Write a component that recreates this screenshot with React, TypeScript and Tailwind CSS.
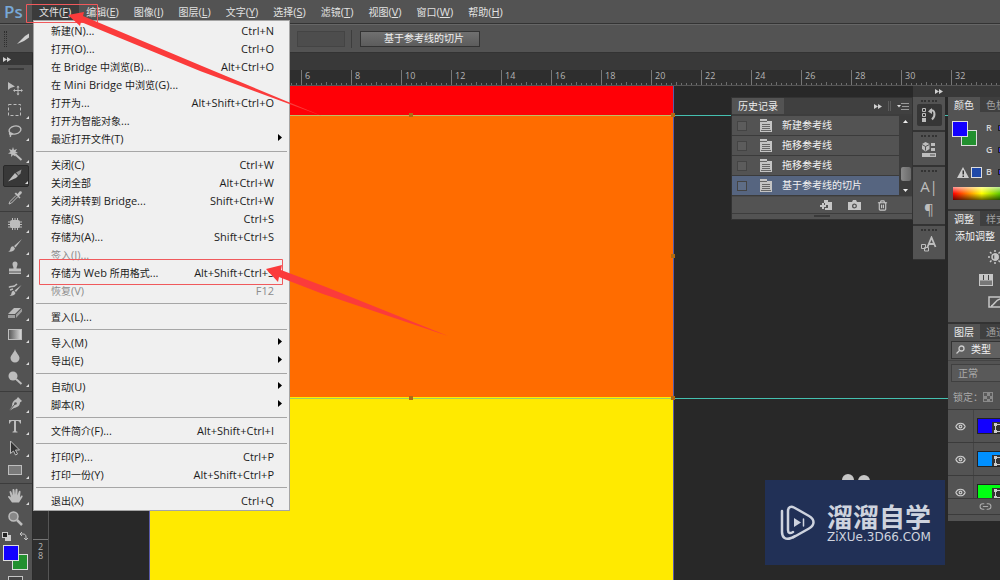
import * as React from "react"
import { Eye, Link2, Trash2 } from "lucide-react"
import clsx from "clsx"

const UI_FONT = "font-['Open_Sans','Noto_Sans_CJK_SC',sans-serif]"

const MENUS: [string, string][] = [
  ["文件", "F"],
  ["编辑", "E"],
  ["图像", "I"],
  ["图层", "L"],
  ["文字", "Y"],
  ["选择", "S"],
  ["滤镜", "T"],
  ["视图", "V"],
  ["窗口", "W"],
  ["帮助", "H"],
]

interface MenuEntry {
  label: string
  keys?: string
  submenu?: boolean
  disabled?: boolean
}

const FILE_MENU: MenuEntry[][] = [
  [
    { label: "新建(N)...", keys: "Ctrl+N" },
    { label: "打开(O)...", keys: "Ctrl+O" },
    { label: "在 Bridge 中浏览(B)...", keys: "Alt+Ctrl+O" },
    { label: "在 Mini Bridge 中浏览(G)..." },
    { label: "打开为...", keys: "Alt+Shift+Ctrl+O" },
    { label: "打开为智能对象..." },
    { label: "最近打开文件(T)", submenu: true },
  ],
  [
    { label: "关闭(C)", keys: "Ctrl+W" },
    { label: "关闭全部", keys: "Alt+Ctrl+W" },
    { label: "关闭并转到 Bridge...", keys: "Shift+Ctrl+W" },
    { label: "存储(S)", keys: "Ctrl+S" },
    { label: "存储为(A)...", keys: "Shift+Ctrl+S" },
    { label: "签入(I)...", disabled: true },
    { label: "存储为 Web 所用格式...", keys: "Alt+Shift+Ctrl+S" },
    { label: "恢复(V)", keys: "F12", disabled: true },
  ],
  [{ label: "置入(L)..." }],
  [
    { label: "导入(M)", submenu: true },
    { label: "导出(E)", submenu: true },
  ],
  [
    { label: "自动(U)", submenu: true },
    { label: "脚本(R)", submenu: true },
  ],
  [{ label: "文件简介(F)...", keys: "Alt+Shift+Ctrl+I" }],
  [
    { label: "打印(P)...", keys: "Ctrl+P" },
    { label: "打印一份(Y)", keys: "Alt+Shift+Ctrl+P" },
  ],
  [{ label: "退出(X)", keys: "Ctrl+Q" }],
]

// Chinese glyphs are set one pixel smaller than the latin ones
function Mixed({ text }: { text: string }) {
  return (
    <>
      {text.split(/([\u4e00-\u9fff]+)/).filter(Boolean).map((part, i) => (
        <span key={i} className={/[\u4e00-\u9fff]/.test(part) ? "text-[10px]" : "text-[11px]"}>
          {part}
        </span>
      ))}
    </>
  )
}

function Collapse({ className }: { className?: string }) {
  return (
    <svg className={clsx("h-[5px] w-2 shrink-0", className)} viewBox="0 0 8 5" fill="#d0d0d0">
      <path d="M0 0 4 2.500 0 5zM4 0l4 2.500L4 5z" />
    </svg>
  )
}

function MenuBar() {
  return (
    <nav className="flex h-6 shrink-0 items-center border-b border-[#333] bg-[#535353]">
      <span className="w-8 shrink-0 pl-1 text-[17px] leading-6 font-semibold text-[#78a8d6]">Ps</span>
      {MENUS.map(([name, key], i) => (
        <button
          key={key}
          className={clsx(
            "h-full pr-2 pl-[7px] text-[11px] leading-5 whitespace-nowrap text-[#e2e2e2]",
            i === 0 && "bg-[#3b3b3b]"
          )}
        >
          <span className="text-[10px]">{name}</span>(<u>{key}</u>)
        </button>
      ))}
    </nav>
  )
}

function OptionsBar() {
  return (
    <div className="flex h-[29px] shrink-0 items-center border-t border-b border-t-[#666] border-b-[#333] bg-[#535353]">
      <span className="ml-1 h-4 w-[3px] border-x border-dotted border-[#2e2e2e]" />
      <svg className="ml-2 size-4 text-[#cfcfcf]" viewBox="0 0 16 16" fill="currentColor">
        <path d="M2 13 10 5l4-2.500v4L9 10z" />
      </svg>
      <div className="ml-[266px] h-4 w-12 border border-[#444] bg-[#4d4d4d]" />
      <span className="ml-1.5 h-[18px] w-px bg-[#3d3d3d]" />
      <button className="ml-2 h-4 w-[120px] border border-[#333] bg-linear-to-b from-[#707070] to-[#5c5c5c] pl-2 text-[10px] leading-[13px] text-[#f0f0f0]">
        基于参考线的切片
      </button>
    </div>
  )
}

function FileMenu() {
  return (
    <div className="absolute top-5 left-[33px] z-20 w-[257px] border border-[#a5a5a5] bg-[#f0f0f0] pt-px">
      {FILE_MENU.map((group, g) => (
        <React.Fragment key={g}>
          {g > 0 && <hr className="mx-0.5 mt-[3px] mb-1 border-t border-[#a6a6a6]" />}
          {group.map((item) => (
            <button
              key={item.label}
              disabled={item.disabled}
              className={clsx(
                "flex h-[18px] w-full items-center justify-between pr-[15px] pl-[17px] text-[11px] leading-[18px] whitespace-nowrap",
                item.disabled ? "text-[#8c8c8c]" : "text-[#1c1c1c]"
              )}
            >
              <span>
                <Mixed text={item.label} />
              </span>
              {item.keys && <span>{item.keys}</span>}
              {item.submenu && (
                <svg className="-mr-2 mb-1 h-[7px] w-1" viewBox="0 0 4 7" fill="#000">
                  <path d="M0 0 4 3.500 0 7z" />
                </svg>
              )}
            </button>
          ))}
        </React.Fragment>
      ))}
    </div>
  )
}

interface Tool {
  name: string
  art: React.ReactNode
  single?: boolean
}

const TOOLS: Tool[][] = [
  [
    {
      name: "移动",
      single: true,
      art: (
        <>
          <path d="M1 2v8l2.500-2L8 6.500z" />
          <path d="M11 6.500v8M7 10.500h8" stroke="currentColor" />
          <path d="m11 5.500 1.500 2h-3zM11 15.500l1.500-2h-3zM6 10.500l2-1.500v3zM16 10.500l-2-1.500v3z" />
        </>
      ),
    },
    { name: "选框", art: <rect x="1.500" y="2.500" width="12" height="11" fill="none" stroke="currentColor" strokeDasharray="3 2" /> },
    {
      name: "套索",
      art: (
        <g fill="none" stroke="currentColor" strokeWidth="1.400">
          <ellipse cx="8" cy="6" rx="6" ry="4" transform="rotate(-12 8 6)" />
          <path d="M3 8.500c-1.500 2 1.500 3 2 1.500S2.500 9 3.500 13" />
        </g>
      ),
    },
    {
      name: "魔棒",
      art: (
        <>
          <path d="m6 1 1 3 3-1-1.500 2.500L11 7l-3 .5.500 3L6 9l-2 2 .2-3L1 7.500 3.500 6 2 3l3 1z" />
          <path d="m8 8 6.500 6" stroke="currentColor" strokeWidth="2" />
        </>
      ),
    },
    {
      name: "切片",
      art: (
        <>
          <path d="M1 13.500 8 5l3 3-2 2z" />
          <path d="m9 4.500 5.500-3-1 4-2 2z" opacity=".7" />
        </>
      ),
    },
    {
      name: "吸管",
      art: (
        <>
          <path d="M9 2.500 10.500 4l2-2.500c2-1 3 .5 2 2L12 6l1.500 1.500-1 1L7.500 3.500z" />
          <path d="m9 5.500-6 6L2 14l2.500-1 6-6" fill="none" stroke="currentColor" />
        </>
      ),
    },
  ],
  [
    {
      name: "修补",
      art: (
        <>
          <rect x="3" y="4" width="10" height="8" rx="2" />
          <path d="M5.500 2v12M8 2v12M10.500 2v12M1 6h14M1 8.500h14M1 11h14" stroke="currentColor" />
        </>
      ),
    },
    { name: "画笔", art: <path d="M15 1 8.500 9.500 7 8zM6.500 8.500l1.500 2C7 13.500 4 14 1 13.500c2-.5 2-1 2.500-3s2-2.500 3-2z" /> },
    { name: "仿制图章", art: <path d="M5.500 4a2.500 2.500 0 0 1 5 0c0 2-1 2.500-1 4.500H14v3H2v-3h4.500c0-2-1-2.500-1-4.500zM2 12.500h12V14H2z" /> },
    {
      name: "历史画笔",
      art: (
        <>
          <path d="M14.500 3 9 10 7.500 8.500zM7 9l1.500 2c-1 2.500-3 3-6 2.500 2-.5 1.500-1 2-2.500S6 8.500 7 9z" />
          <path d="M2 5.500C4 3 6 6.500 10 2M3 8l3-1" fill="none" stroke="currentColor" strokeWidth="1.500" />
        </>
      ),
    },
    {
      name: "橡皮擦",
      art: (
        <>
          <path d="m1 10 6-6h7l-6 6z" />
          <path d="M1 11h7v3H1zM9 10.500l6-6v3L9 14z" opacity=".7" />
        </>
      ),
    },
    {
      name: "渐变",
      art: (
        <>
          <defs>
            <linearGradient id="toolGradient">
              <stop stopColor="#555" />
              <stop offset="1" stopColor="#ddd" />
            </linearGradient>
          </defs>
          <rect x="1.500" y="3.500" width="13" height="10" fill="url(#toolGradient)" stroke="currentColor" />
        </>
      ),
    },
    { name: "模糊", art: <path d="M8 1c1 4 4.500 6 4.500 9a4.500 4.500 0 0 1-9 0C3.500 7 7 5 8 1z" /> },
    {
      name: "减淡",
      art: (
        <>
          <circle cx="6" cy="6" r="4.500" />
          <path d="m9 9 5.500 5" stroke="currentColor" strokeWidth="2" />
        </>
      ),
    },
  ],
  [
    {
      name: "钢笔",
      art: (
        <>
          <path d="m11 1 4 4-2 1.500c0 3-2.500 5-6 5.500l-5 3 3-5C5 6 7 4 9.500 3z" />
          <path d="m2 15 6-7" stroke="#535353" />
          <circle cx="8.500" cy="7.500" r="1.300" fill="#535353" />
        </>
      ),
    },
    { name: "文字", art: <path d="M2 2h12v3.500h-1C12.500 3.500 12 3 9 3v9.500c0 1 .5 1 1.500 1.200v.8h-5v-.8C6.500 13.500 7 13.500 7 12.500V3C4 3 3.500 3.500 3 5.500H2z" /> },
    { name: "路径选择", art: <path d="M3.500 1v12.500l3-2.500 2 4 2-1-2-4h4z" fill="#333" stroke="currentColor" /> },
    { name: "矩形", art: <rect x="1.500" y="3.500" width="13" height="9" fill="#7a7a7a" stroke="currentColor" /> },
  ],
  [
    { name: "抓手", art: <path d="M5 14.500 1 9c0-1.500 1.500-1 3 .5L2.500 4c0-1.300 1.500-1.300 2 0l1 3.500V2c0-1.300 1.800-1.300 2 0l.5 5 .5-5.500c.5-1 2-1 2 .3V7.500l1.200-4c.5-1.200 2-.8 1.800.5L13 9.500l1-1.500c1-1 2-.3 1.500 1L12 14.500z" /> },
    {
      name: "缩放",
      single: true,
      art: (
        <>
          <circle cx="6.500" cy="6.500" r="4.500" fill="#888" stroke="currentColor" strokeWidth="1.500" />
          <path d="m10 10 5 5" stroke="currentColor" strokeWidth="2.500" />
        </>
      ),
    },
  ],
]

function Toolbar() {
  return (
    <aside className="flex w-[33px] shrink-0 flex-col overflow-hidden border-r border-[#2b2b2b] bg-[#535353]">
      <div className="flex h-3 shrink-0 items-center bg-[#383838] pl-[3px]">
        <Collapse />
      </div>
      <div className="mx-2 mt-[3px] mb-[7px] h-[2px] shrink-0 bg-[#3a3a3a]" />
      {TOOLS.map((group, g) => (
        <div key={g} className={clsx("shrink-0", g > 0 && "mt-[2px] border-t border-[#3c3c3c] pt-px")}>
          {group.map((tool) => (
            <button
              key={tool.name}
              aria-label={tool.name}
              className={clsx(
                "relative mx-[3px] flex h-[22px] w-[26px] items-center justify-center rounded-xs text-[#bdbdbd]",
                tool.name === "切片" && "border border-[#292929] bg-[#383838]"
              )}
            >
              <svg className="mr-0.5 size-4" viewBox="0 0 16 16" fill="currentColor">
                {tool.art}
              </svg>
              {!tool.single && (
                <svg className="absolute right-0 bottom-0.5 size-[3px]" viewBox="0 0 3 3" fill="#ddd">
                  <path d="M3 0v3H0z" />
                </svg>
              )}
            </button>
          ))}
        </div>
      ))}
      <div className="flex h-[14px] shrink-0 items-center gap-2 pl-0.5 text-[#c4c4c4]">
        <svg className="size-[9px]" viewBox="0 0 9 9">
          <rect x="3" y="3" width="6" height="6" fill="#ccc" />
          <rect x=".5" y=".5" width="5" height="5" fill="#222" stroke="#ccc" />
        </svg>
        <svg className="size-[9px]" viewBox="0 0 9 9" fill="none" stroke="currentColor">
          <path d="M3 0 1 2l2 2M1 2h3c2 0 3 1 3 3v3M5 6l2 2 2-2" />
        </svg>
      </div>
      <Swatches className="mt-0.5 ml-[3px]" />
      <div className="mt-1.5 ml-2 h-3 w-[15px] shrink-0 border border-[#c4c4c4] bg-[#444]" />
    </aside>
  )
}

function Swatches({ className }: { className?: string }) {
  return (
    <div className={clsx("relative h-[25px] w-[25px] shrink-0", className)}>
      <span className="absolute right-0 bottom-0 size-4 border border-[#ddd] bg-[#22902f]" />
      <span className="absolute top-0 left-0 size-4 border border-[#ddd] bg-[#1200ff]" />
    </div>
  )
}

// one cell is two centimetres; the origin sits at the left edge of the artboard
function Ruler() {
  return (
    <div className="flex h-4 shrink-0 overflow-hidden border-b border-[#555] bg-[#2e2e2e] pl-[18px]">
      {Array.from({ length: 19 }, (_, i) => (
        <div key={i} className="flex w-[50px] shrink-0 flex-col justify-between border-l border-[#777]">
          <span className="pl-[3px] text-[9px] leading-3 text-[#b4b4b4]">{Math.abs(i * 2 - 4)}</span>
          <svg className="h-[3px] w-[49px] shrink-0" stroke="#6d6d6d">
            <path d="M4.500 1v2M9.500 1v2M14.500 1v2M19.500 1v2M24.500 0v3M29.500 1v2M34.500 1v2M39.500 1v2M44.500 1v2" />
          </svg>
        </div>
      ))}
    </div>
  )
}

function Artwork() {
  return (
    <div className="absolute inset-0 overflow-hidden">
      <div className="absolute inset-y-0 left-0 flex w-4 flex-col justify-end border-r border-[#555] bg-[#2e2e2e] pb-5">
        <div className="border-t border-[#777] pl-[5px] text-[9px] leading-[9px] text-[#b4b4b4]">
          <div className="pt-0.5">2</div>
          <div>8</div>
        </div>
      </div>
      <div className="absolute inset-y-0 left-[116px] flex w-[525px] flex-col border-x border-[#5a5aa8]">
        <div className="h-[29px] bg-[#ff0006]" />
        <div className="h-[282px] bg-[#ff6c00]" />
        <div className="flex-1 bg-[#ffea00]" />
      </div>
      <svg className="absolute inset-0 size-full">
        <path d="M16 29.500h2000M16 312.500h2000" stroke="#45c0b0" />
        <path d="M117 29.500h523" stroke="#bdbf66" />
        <path d="M117 312.500h523" stroke="#9fcf62" />
        <g fill="#b06a14">
          <rect x="376" y="27" width="4" height="4" />
          <rect x="638" y="27" width="4" height="4" />
          <rect x="638" y="168" width="4" height="4" />
          <rect x="376" y="310" width="4" height="4" />
          <rect x="638" y="310" width="4" height="4" />
        </g>
      </svg>
    </div>
  )
}

function PanelTabs({ active, rest }: { active: string; rest: string }) {
  return (
    <div className="flex h-[15px] shrink-0 bg-[#3f3f3f] text-[10px] leading-[14px] whitespace-nowrap">
      <button className="bg-[#535353] px-1.5 text-[#ececec]">{active}</button>
      <button className="pl-1.5 text-[#a0a0a0]">{rest}</button>
    </div>
  )
}

const HISTORY = ["新建参考线", "拖移参考线", "拖移参考线", "基于参考线的切片"]

function HistoryPanel() {
  return (
    <section className="absolute top-[11px] right-[87px] w-[182px] border border-[#333] bg-[#535353]">
      <div className="flex h-4 items-center bg-[#404040]">
        <button className="h-full bg-[#535353] px-1.5 text-[10px] leading-[15px] text-[#ececec]">历史记录</button>
        <Collapse className="ml-auto" />
        <span className="mx-1.5 h-2.5 w-[3px] border-x border-[#5c5c5c]" />
        <svg className="mr-[3px] h-[7px] w-3" viewBox="0 0 12 7" stroke="#999">
          <path d="M4 .5h8M5 3.500h7M4 6.500h8" />
          <path d="M0 2h4L2 4.500z" fill="#ddd" stroke="none" />
        </svg>
      </div>
      <div className="flex border-t-2 border-b border-t-[#3d3d3d] border-b-[#4a4a4a]">
        <ul className="flex-1">
          {HISTORY.map((step, i) => (
            <li
              key={i}
              className={clsx(
                "flex h-5 items-center border-b border-[#3b3b3b] pl-[5px] text-[10px] text-[#f2f2f2]",
                i === 3 && "bg-[#566580]"
              )}
            >
              <span className="size-[10px] border border-[#444] bg-white/5" />
              <svg className="mr-2.5 ml-[13px] h-[13px] w-3" viewBox="0 0 12 13">
                <path d="M0 0h7v2h5v11H0z" fill="#c4c4c4" />
                <path d="M2 5.500h8M2 7.500h8M2 9.500h8M1 11.500h10" stroke="#666" />
                <path d="M0 2.500h7" stroke="#666" />
              </svg>
              {step}
            </li>
          ))}
        </ul>
        <div className="flex w-[13px] flex-col items-center justify-end bg-[#3c3c3c] pb-1">
          <svg className="mt-1 mb-auto h-[3px] w-[5px]" fill="#eee">
            <path d="M2.500 0 5 3H0z" />
          </svg>
          <span className="mb-2 h-[14px] w-2.5 rounded-xs bg-linear-to-r from-[#8a8a8a] to-[#6a6a6a]" />
          <svg className="h-[3px] w-[5px]" fill="#eee">
            <path d="M0 0h5L2.500 3z" />
          </svg>
        </div>
      </div>
      <div className="flex h-4 items-center justify-end gap-4 pr-6 text-[#c6c6c6]">
        <svg className="h-3 w-3" viewBox="0 0 12 12" fill="currentColor">
          <path d="M4 1h4v2h4v8H5V9h3V6H5V4H4zM0 6h2V4h2v2h2v2H4v2H2V8H0z" />
        </svg>
        <svg className="h-3 w-[13px]" viewBox="0 0 13 12" fill="currentColor" fillRule="evenodd">
          <path d="M0 3h4l1-2h3l1 2h4v8H0zM6.500 4.500a2.500 2.500 0 1 0 0 5 2.500 2.500 0 0 0 0-5z" />
          <circle cx="6.500" cy="7" r="1.200" />
        </svg>
        <Trash2 className="size-[11px]" strokeWidth={2.5} />
      </div>
      <div className="flex h-1.5 items-start justify-center border-t border-[#3d3d3d]">
        <span className="mt-px h-[2px] w-4 bg-[#3a3a3a]" />
      </div>
    </section>
  )
}

function DockGroup({ children }: { children: React.ReactNode }) {
  return (
    <div className="flex flex-col items-center bg-[#535353] pt-[3px] pb-1 text-[#bdbdbd]">
      <span className="mb-0.5 h-0 w-4 border-t-2 border-dotted border-[#333]" />
      {children}
    </div>
  )
}

function IconDock() {
  return (
    <div className="flex w-8 shrink-0 flex-col gap-0.5 self-start bg-[#333] pb-px">
      <DockGroup>
        <button aria-label="历史记录" className="flex h-[22px] w-[25px] items-center justify-center rounded-xs bg-[#363636]">
          <svg className="size-4" viewBox="0 0 16 16" fill="none" stroke="currentColor">
            <path d="M1.500 1.500h3v3h-3zM1.500 6.500h3v3h-3z" />
            <path d="M1 11h4v4H1z" fill="currentColor" stroke="none" />
            <path d="M9 3.500c5-1.500 6 5 2 9" strokeWidth="2" />
            <path d="M7 4.500 11 1v6z" fill="currentColor" stroke="none" />
          </svg>
        </button>
      </DockGroup>
      <DockGroup>
        <button aria-label="属性" className="flex h-[22px] items-center">
          <svg className="size-4" viewBox="0 0 16 16" fill="currentColor">
            <path d="m4.500 0 4 2v5l-4 2.500L1 7V2zM10 1h4v3h-4zM10 6h4v3h-4zM1 11h14v4H1z" />
            <path d="m1 2.500 3.500 2 4-2M4.500 4.500v4M9 13h5" stroke="#535353" fill="none" />
          </svg>
        </button>
      </DockGroup>
      <DockGroup>
        <button aria-label="字符" className="h-[23px] text-[15px] leading-6">
          A|
        </button>
        <button aria-label="段落" className="h-[23px] text-[15px] leading-6">
          ¶
        </button>
      </DockGroup>
      <DockGroup>
        <button aria-label="字符样式" className="flex h-[22px] items-center">
          <svg className="size-4" viewBox="0 0 16 16" fill="none" stroke="currentColor">
            <path d="m6.500 11 4-9.500 4 9.500M8 8h5" strokeWidth="1.800" />
            <path d="M.500 8.500h4v4h-4zM3.500 11.500h4v3.500h-4z" />
          </svg>
        </button>
      </DockGroup>
    </div>
  )
}

function ColorPanel() {
  return (
    <section className="h-[112px] shrink-0 bg-[#535353]">
      <PanelTabs active="颜色" rest="色板" />
      <div className="flex pt-[9px]">
        <div className="w-[38px] shrink-0 pl-1">
          <Swatches />
          <div className="mt-[21px] flex items-center gap-0.5 pl-[5px]">
            <svg className="h-[11px] w-3" viewBox="0 0 12 11">
              <path d="M6 0 12 11H0z" fill="#ccc" />
              <path d="M5.500 3.500h1.500v4H5.500zM5.500 8.500h1.500V10H5.500z" fill="#333" />
            </svg>
            <span className="size-[11px] shrink-0 border border-[#ddd] bg-[#1f49a8]" />
          </div>
        </div>
        <div className="flex flex-col text-[9px] leading-[22px] font-semibold text-[#d5d5d5]">
          {["R", "G", "B"].map((c) => (
            <label key={c} className="-mt-1 mb-1 flex items-center gap-1">
              <span className="w-2">{c}</span>
              <span className="h-1.5 w-8 border border-[#222] bg-[#3a34e0]" />
            </label>
          ))}
        </div>
      </div>
      <div className="ml-[5px] h-[13px] w-[180px] bg-[linear-gradient(to_bottom,rgba(255,255,255,0.6),transparent_50%,rgba(0,0,0,0.6)),linear-gradient(to_right,#f00,#ff0_16%,#0a0_32%,#0ff_50%,#00f_66%,#f0f_83%,#f00)]" />
    </section>
  )
}

function AdjustPanel() {
  return (
    <section className="h-[111px] shrink-0 bg-[#535353]">
      <PanelTabs active="调整" rest="样式" />
      <p className="pt-0.5 pl-[7px] text-[10px] leading-4 whitespace-nowrap text-[#f2f2f2]">添加调整</p>
      <div className="flex flex-col gap-2.5 pt-1.5 text-[#c6c6c6]">
        <svg className="ml-10 size-[14px]" viewBox="0 0 14 14" fill="none" stroke="currentColor" strokeWidth="1.500">
          <circle cx="7" cy="7" r="3" />
          <path d="M7 4v6a3 3 0 0 0 0-6z" fill="currentColor" />
          <path d="M7 0v2M7 12v2M0 7h2M12 7h2M2 2l1.500 1.500M10.500 10.500 12 12M12 2l-1.500 1.500M2 12l1.500-1.500" />
        </svg>
        <svg className="ml-[31px] h-3 w-[14px]" viewBox="0 0 14 12" fill="currentColor">
          <path d="M0 0h14v12H0z" />
          <path d="M1 6.500h12V11H1z" fill="#777" />
          <path d="M4.500 1v5M9.500 1v5" stroke="#444" />
        </svg>
        <svg className="ml-10 h-3 w-[14px]" viewBox="0 0 14 12" fill="none" stroke="currentColor" strokeWidth="1.500">
          <path d="M1 1h12v10H1zM3 10C6 10 7 4 12 3" />
        </svg>
      </div>
    </section>
  )
}

const LAYERS = ["bg-[#1200ff]", "bg-[#0090ff]", "bg-[#00ff12]"]

function LayersPanel() {
  return (
    <section className="shrink-0 bg-[#535353]">
      <PanelTabs active="图层" rest="通道" />
      <div className="flex h-[22px] items-center border-b border-[#444] pl-[3px]">
        <button className="flex h-[18px] w-40 shrink-0 items-center gap-1.5 border border-[#333] bg-[#616161] pl-1 text-[10px] text-[#f2f2f2]">
          <svg className="size-[9px]" viewBox="0 0 9 9" fill="none" stroke="#ccc" strokeWidth="1.300">
            <circle cx="5.500" cy="3.500" r="2.500" />
            <path d="M3.500 5.500.5 8.500" />
          </svg>
          类型
        </button>
      </div>
      <div className="flex h-6 items-center pl-[3px]">
        <button className="h-[18px] w-40 shrink-0 border border-[#404040] bg-[#595959] pl-1.5 text-left text-[10px] leading-4 text-[#aaa]">
          正常
        </button>
      </div>
      <div className="flex h-[25px] items-center gap-1 border-b border-[#3b3b3b] pl-[5px] text-[10px] whitespace-nowrap text-[#aaa]">
        锁定：
        <svg className="-ml-1 size-[10px] shrink-0" viewBox="0 0 10 10">
          <rect width="10" height="10" fill="#8a8a8a" />
          <path d="M1 1h3v3H1zM4 4h3v3H4zM7 1h2v3H7zM1 7h3v2H1zM7 7h2v2H7z" fill="#5a5a5a" />
        </svg>
      </div>
      <ul className="h-[88px] overflow-hidden">
        {LAYERS.map((color) => (
          <li key={color} className="flex h-[33px] border-b border-[#3b3b3b]">
            <span className="flex w-[26px] shrink-0 items-center justify-center border-r border-[#444]">
              <Eye className="size-[11px] text-[#ccc]" strokeWidth={2.5} />
            </span>
            <span className={clsx("mt-2 ml-[3px] flex h-4 w-[30px] shrink-0 items-end justify-end border border-[#222]", color)}>
              <svg className="h-[11px] w-[14px]" viewBox="0 0 14 11">
                <path d="M0 0h14v11H0z" fill="#333" />
                <path d="M3.500 2.500h10v7h-10z" fill="none" stroke="#ccc" />
                <path d="M2 1h3v3H2zM2 8h3v3H2z" fill="#ccc" />
              </svg>
            </span>
          </li>
        ))}
      </ul>
      <div className="flex h-4 items-center border-t border-[#3b3b3b] pl-[31px]">
        <Link2 className="size-[13px] shrink-0 text-[#aaa]" />
      </div>
      <div className="h-[7px] border-t border-[#3b3b3b]" />
    </section>
  )
}

function Watermark() {
  return (
    <div className="absolute right-[55px] bottom-[15px] flex h-[85px] w-[180px] items-center bg-[#213056] pl-[15px] text-[#ced3de]">
      <svg className="absolute -top-3 left-[75px] -z-10 h-6 w-8" fill="#c6c6c6">
        <circle cx="8" cy="12" r="6" />
        <circle cx="24" cy="13" r="6" />
      </svg>
      <svg className="h-9 w-[35px] shrink-0" viewBox="0 0 35 36" fill="none" stroke="currentColor" strokeWidth="2.500" strokeLinecap="round">
        <path d="M2 6v21c0 6 4 8 9 6l4-2" />
        <path d="M13 27c-3 2-5 1-5-2V6c0-4 3-5 6-3.500l15 8.500c6 3.500 6 9 0 12.500l-16 9" />
        <path d="m14 13 7 4.500-7 4.500z" fill="currentColor" stroke="none" />
        <path d="M23.500 14v7" strokeWidth="1.500" />
      </svg>
      <div className="pl-3 whitespace-nowrap">
        <div className="text-[26px] leading-7 font-bold">溜溜自学</div>
        <div className="font-['DejaVu_Sans',sans-serif] text-[12px] leading-3">ZiXUe.3D66.COM</div>
      </div>
    </div>
  )
}

// red boxes and arrows that point out the two clicks
function Annotations() {
  return (
    <svg className="pointer-events-none absolute inset-0 z-30 size-full">
      <g fill="none" stroke="#f0595c">
        <path d="M26.500 4.500h71v18h-71z" />
        <path d="M39.500 259.500h243v25h-243z" />
      </g>
      <g fill="#fb3b3b">
        <path d="M68 15 84 12l-1 4 119 50 120 50-122-45L81 22l-1 4z" />
        <path d="m266 269 16-4-1 5 45 17 122 49-125-42-44-17-1 5z" />
      </g>
    </svg>
  )
}

export default function App() {
  return (
    <div className={clsx("relative flex h-screen flex-col overflow-hidden bg-[#282828]", UI_FONT)}>
      <MenuBar />
      <OptionsBar />
      <div className="flex min-h-0 flex-1">
        <Toolbar />
        <main className="flex min-w-0 flex-1 flex-col">
          <div className="h-[17px] shrink-0 bg-[#393939]" />
          <Ruler />
          <div className="relative isolate flex min-h-0 flex-1 justify-end">
            <Artwork />
            <Watermark />
            <HistoryPanel />
            <div className="relative flex w-[87px] flex-col self-start">
              <div className="flex h-[11px] items-center bg-[#383838] pl-[22px]">
                <Collapse />
              </div>
              <div className="flex gap-[3px]">
                <IconDock />
                <div className="flex w-[52px] flex-col gap-0.5 overflow-hidden bg-[#333]">
                  <ColorPanel />
                  <AdjustPanel />
                  <LayersPanel />
                </div>
              </div>
            </div>
          </div>
        </main>
      </div>
      <FileMenu />
      <Annotations />
    </div>
  )
}
